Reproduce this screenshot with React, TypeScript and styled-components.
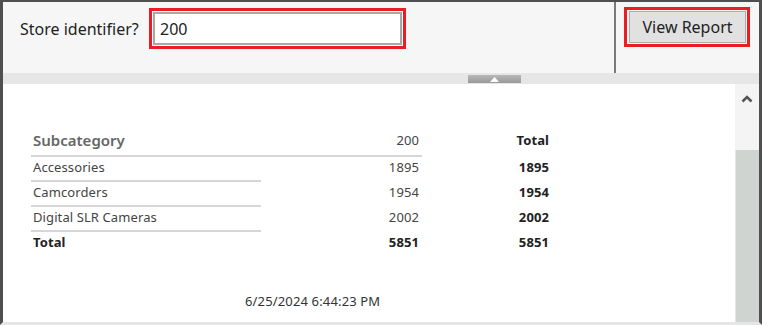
import React from 'react'
import styled, { createGlobalStyle } from 'styled-components'

const GlobalStyle = createGlobalStyle`
  html, body {
    margin: 0;
    padding: 0;
    background: #ffffff;
  }
  body {
    font-family: "Segoe UI", "Noto Sans", "Open Sans", sans-serif;
  }
`

const Frame = styled.div`
  width: 762px;
  height: 325px;
  box-sizing: border-box;
  border-top: 2px solid #4f4f4f;
  border-left: 3px solid #4f4f4f;
  border-right: 3px solid #4f4f4f;
  border-bottom: 3px solid #e6e6e6;
  display: flex;
  flex-direction: column;
  overflow: hidden;
`

const ParamBar = styled.div`
  height: 71px;
  background: #f6f6f6;
  display: flex;
`

const ParamArea = styled.div`
  width: 611px;
  display: flex;
  align-items: flex-start;
  padding: 6px 0 0 17px;
  box-sizing: border-box;
`

const Label = styled.span`
  font-size: 16px;
  color: #222;
  margin-top: 10px;
  width: 129px;
`

const Highlight = styled.div`
  border: 3px solid #ea1c24;
  padding: 1px;
  background: #fff;
`

const Input = styled.input`
  width: 249px;
  height: 33px;
  box-sizing: border-box;
  border: 2px solid #a8a8a8;
  outline: none;
  padding: 0 0 0 5px;
  font-family: inherit;
  font-size: 16px;
  color: #222;
  background: #fff;
`

const Separator = styled.div`
  width: 2px;
  background: #7a7a7a;
`

const ButtonArea = styled.div`
  flex: 1;
  padding: 5px 0 0 8px;
`

const ButtonHighlight = styled(Highlight)`
  padding: 1px 1px 1px 2px;
  display: inline-block;
  background: #f6f6f6;
`

const Button = styled.button`
  width: 117px;
  height: 32px;
  box-sizing: border-box;
  background: #e1e1e1;
  border: 1px solid #adadad;
  font-family: inherit;
  font-size: 16px;
  color: #222;
  padding: 0;
  cursor: pointer;
`

const Splitter = styled.div`
  height: 11px;
  background: #e6e6e6;
  display: flex;
  align-items: center;
  padding-left: 465px;
`

const Handle = styled.div`
  width: 53px;
  height: 8px;
  margin-top: 1px;
  background: linear-gradient(#b8b8b8, #999);
  display: flex;
  align-items: center;
  justify-content: center;
`

const Report = styled.div`
  flex: 1;
  display: flex;
  min-height: 0;
`

const Content = styled.div`
  flex: 1;
  background: #fff;
  padding: 43px 0 0 28px;
`

const Grid = styled.div`
  display: grid;
  grid-template-columns: 230px 161px 130px;
  font-size: 13px;
  letter-spacing: 0.1px;
  color: #3a3a3a;
`

const Cell = styled.div<{ $align?: 'left' | 'right'; $bold?: boolean; $line?: boolean; $head?: boolean }>`
  height: ${p => (p.$head ? 30 : 25)}px;
  box-sizing: border-box;
  display: flex;
  align-items: center;
  justify-content: ${p => (p.$align === 'right' ? 'flex-end' : 'flex-start')};
  padding: ${p => (p.$head ? '0 3px 2px 2px' : '0 3px 4px 2px')};
  font-weight: ${p => (p.$bold ? 700 : 400)};
  border-bottom: ${p => (p.$line ? '2px solid #d6d6d6' : '2px solid transparent')};
  color: ${p => (p.$bold ? '#222' : '#444')};
`

const HeadTitle = styled(Cell)`
  font-size: 15px;
  letter-spacing: 0;
  font-weight: 600;
  color: #666;
`

const Stamp = styled.div`
  margin: 35px 0 0 214px;
  font-size: 13px;
  letter-spacing: 0.15px;
  color: #333;
`

const Scrollbar = styled.div`
  width: 24px;
  display: flex;
  flex-direction: column;
  background: #f4f4f4;
`

const Arrow = styled.div`
  height: 66px;
  display: flex;
  justify-content: center;
  padding-top: 11px;
  box-sizing: border-box;
`

const Thumb = styled.div`
  flex: 1;
  background: #cfd4d1;
  border-left: 1px solid #e4e6e5;
`

const rows = [
  { name: 'Accessories', value: '1895' },
  { name: 'Camcorders', value: '1954' },
  { name: 'Digital SLR Cameras', value: '2002' },
]

export default function App() {
  return (
    <>
      <GlobalStyle />
      <Frame>
        <ParamBar>
          <ParamArea>
            <Label>Store identifier?</Label>
            <Highlight>
              <Input defaultValue="200" />
            </Highlight>
          </ParamArea>
          <Separator />
          <ButtonArea>
            <ButtonHighlight>
              <Button>View Report</Button>
            </ButtonHighlight>
          </ButtonArea>
        </ParamBar>
        <Splitter>
          <Handle>
            <svg width="9" height="5" viewBox="0 0 9 5">
              <polygon points="0,5 4.5,0 9,5" fill="#fff" />
            </svg>
          </Handle>
        </Splitter>
        <Report>
          <Content>
            <Grid>
              <HeadTitle $head $line>Subcategory</HeadTitle>
              <Cell $head $line $align="right">200</Cell>
              <Cell $head $align="right" $bold>Total</Cell>
              {rows.map(r => (
                <React.Fragment key={r.name}>
                  <Cell $line>{r.name}</Cell>
                  <Cell $align="right">{r.value}</Cell>
                  <Cell $align="right" $bold>{r.value}</Cell>
                </React.Fragment>
              ))}
              <Cell $bold>Total</Cell>
              <Cell $align="right" $bold>5851</Cell>
              <Cell $align="right" $bold>5851</Cell>
            </Grid>
            <Stamp>6/25/2024 6:44:23 PM</Stamp>
          </Content>
          <Scrollbar>
            <Arrow>
              <svg width="12" height="8" viewBox="0 0 12 8">
                <polyline points="1.5,6.5 6,2 10.5,6.5" fill="none" stroke="#555" strokeWidth="2.6" />
              </svg>
            </Arrow>
            <Thumb />
          </Scrollbar>
        </Report>
      </Frame>
    </>
  )
}
